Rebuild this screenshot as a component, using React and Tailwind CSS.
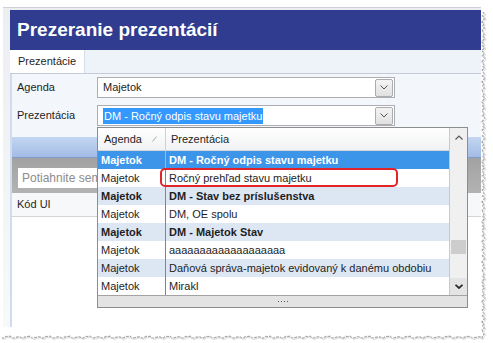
import React from "react";

const rows = [
  { agenda: "Majetok", name: "DM - Ročný odpis stavu majetku", bold: true, selected: true },
  { agenda: "Majetok", name: "Ročný prehľad stavu majetku" },
  { agenda: "Majetok", name: "DM - Stav bez príslušenstva", bold: true },
  { agenda: "Majetok", name: "DM, OE spolu" },
  { agenda: "Majetok", name: "DM - Majetok Stav", bold: true },
  { agenda: "Majetok", name: "aaaaaaaaaaaaaaaaaaa" },
  { agenda: "Majetok", name: "Daňová správa-majetok evidovaný k danému obdobiu" },
  { agenda: "Majetok", name: "Mirakl" },
];

const jitter = [0, 1.4, -0.6, 1.9, 0.4, -1.1, 0.9, -0.3, 1.6, -0.8];

function tornEdge() {
  const right = [];
  for (let i = 0; i <= 162; i++) {
    right.push(`${483 + jitter[i % 10]},${12 + i * 2}`);
  }
  const bottom = [];
  for (let i = 241; i >= 1; i--) {
    bottom.push(`${i * 2},${337 + jitter[(i * 3) % 10] * 0.7}`);
  }
  return right.concat(bottom).join(" ");
}

function ComboButton() {
  return (
    <div className="w-[18px] h-[18px] mr-[1px] flex items-center justify-center border border-[#acacac] rounded-[2px] bg-gradient-to-b from-[#f4f4f4] to-[#e1e1e1]">
      <svg width="8" height="5" viewBox="0 0 8 5">
        <path d="M0.5 0.5 L4 4 L7.5 0.5" fill="none" stroke="#555" strokeWidth="1" />
      </svg>
    </div>
  );
}

function FormRow({ label, children }) {
  return (
    <div className="flex items-center h-[21px]">
      <div className="w-[85px] pl-[5px]">{label}</div>
      <div className="w-[298px] h-[21px] flex items-center justify-between border border-[#abadb3] bg-white pl-[5px]">
        {children}
        <ComboButton />
      </div>
    </div>
  );
}

export default function App() {
  return (
    <div className="relative w-[493px] h-[343px] overflow-hidden bg-white font-['Liberation_Sans',Arial,sans-serif] text-[11px] text-[#1e1e1e]">
      <div className="ml-[3px] mt-[7px] w-[478px] h-[320px] border-t border-[#cdd0d6] bg-gradient-to-b from-[#eceef2] to-[#f8f9fa] pl-[7px] pt-[2px]">
        <div className="w-[471px] h-[317px] flex flex-col bg-white">
          {/* title */}
          <div className="h-[40px] shrink-0 bg-[#2f3c8f] flex items-center pl-[7px] text-white font-bold text-[19px]">
            Prezeranie prezentácií
          </div>
          {/* tabs */}
          <div className="h-[24px] shrink-0 flex bg-[#eef2f9] border-b border-[#c5cbd6]">
            <div className="w-[75px] bg-white flex items-center pl-[8px] border-r border-[#d8dde6]">
              Prezentácie
            </div>
          </div>
          {/* body */}
          <div className="flex-1 flex flex-col border-l-2 border-[#cfdcef]">
            <div className="bg-[#f3f6fb] pt-[3px] pb-[11px] flex flex-col gap-[7px]">
              <FormRow label="Agenda">
                <span>Majetok</span>
              </FormRow>
              <FormRow label="Prezentácia">
                <span className="bg-[#3399ff] text-white leading-[16px] px-[1px]">
                  DM - Ročný odpis stavu majetku
                </span>
              </FormRow>
            </div>
            <div className="h-[21px] shrink-0 bg-gradient-to-b from-[#c3d6f1] to-[#a3bce5] border-b border-[#7f9bc6]" />
            <div className="h-[35px] shrink-0 bg-gradient-to-b from-[#a2a2a2] to-[#b3b3b3] pl-[6px] pt-[10px]">
              <div className="w-[79px] h-[20px] bg-white flex items-center pl-[4px] text-[12px] text-[#8c8c8c] whitespace-nowrap overflow-hidden">
                Potiahnite sem
              </div>
            </div>
            <div className="h-[24px] shrink-0 flex items-center pl-[5px] bg-[#f7f8fa] border-b border-[#d4d4d4]">
              Kód UI
            </div>
            <div className="flex-1 bg-white" />
          </div>
        </div>
      </div>

      {/* dropdown list */}
      <div className="absolute left-[97px] top-[127px] w-[371px] h-[181px] flex flex-col border border-[#8d8d8d] bg-white">
        <div className="flex-1 flex">
          <div className="flex-1 flex flex-col">
            <div className="h-[23px] shrink-0 flex bg-gradient-to-b from-white to-[#f1f2f4] border-b border-[#d5d5d5]">
              <div className="w-[68px] flex items-center justify-between pl-[6px] pr-[8px] border-r border-[#d0d0d0]">
                <span>Agenda</span>
                <svg width="5" height="6" viewBox="0 0 5 6">
                  <path d="M0.5 5.5 L4.5 0.5" stroke="#a8a8a8" strokeWidth="1" />
                </svg>
              </div>
              <div className="flex-1 flex items-center pl-[5px]">Prezentácia</div>
            </div>
            {rows.map((r, i) => (
              <div
                key={i}
                className={
                  "h-[18px] flex " +
                  (r.selected
                    ? "bg-[#3d95e9] text-white"
                    : i % 2 === 0
                    ? "bg-[#dde7f4]"
                    : "bg-white") +
                  (r.bold ? " font-bold" : "")
                }
              >
                <div
                  className={
                    "w-[68px] flex items-center pl-[3px] border-r " +
                    (r.selected ? "border-[#8fbcec]" : "border-[#858585]")
                  }
                >
                  {r.agenda}
                </div>
                <div className="flex-1 flex items-center pl-[3px] whitespace-nowrap overflow-hidden">
                  {r.name}
                </div>
              </div>
            ))}
          </div>
          {/* scrollbar */}
          <div className="w-[18px] flex flex-col bg-[#f0f0f0] border-l border-[#c9c9c9]">
            <div className="h-[18px] flex items-center justify-center">
              <svg width="8" height="5" viewBox="0 0 8 5">
                <path d="M0.5 4.5 L4 1 L7.5 4.5" fill="none" stroke="#5a5a5a" strokeWidth="1.2" />
              </svg>
            </div>
            <div className="h-[94px]" />
            <div className="h-[14px] mx-[1px] bg-[#cdcdcd]" />
            <div className="flex-1" />
            <div className="h-[17px] bg-[#e4e4e4] flex items-center justify-center">
              <svg width="8" height="5" viewBox="0 0 8 5">
                <path d="M0.5 0.8 L4 4 L7.5 0.8" fill="none" stroke="#2a2a2a" strokeWidth="1.8" />
              </svg>
            </div>
          </div>
        </div>
        {/* resize grip */}
        <div className="h-[12px] shrink-0 flex items-center justify-center gap-[2px] bg-[#e3e3e3] border-t border-[#a3a3a3]">
          <span className="w-[1px] h-[1px] bg-[#555]" />
          <span className="w-[1px] h-[1px] bg-[#555]" />
          <span className="w-[1px] h-[1px] bg-[#555]" />
          <span className="w-[1px] h-[1px] bg-[#555]" />
        </div>
      </div>

      {/* red highlight annotation */}
      <div className="absolute left-[160px] top-[168px] w-[238px] h-[19px] border-2 border-[#e0242a] rounded-[5px]" />

      {/* torn paper edge */}
      <svg className="absolute left-0 top-0 pointer-events-none" width="493" height="343" viewBox="0 0 493 343">
        <polyline points={tornEdge()} fill="none" stroke="#a9a9a9" strokeWidth="1.3" strokeDasharray="3 1" />
        <polyline points={tornEdge()} fill="none" stroke="#d8d8d8" strokeWidth="1" transform="translate(1.2 1.2)" />
      </svg>
    </div>
  );
}
